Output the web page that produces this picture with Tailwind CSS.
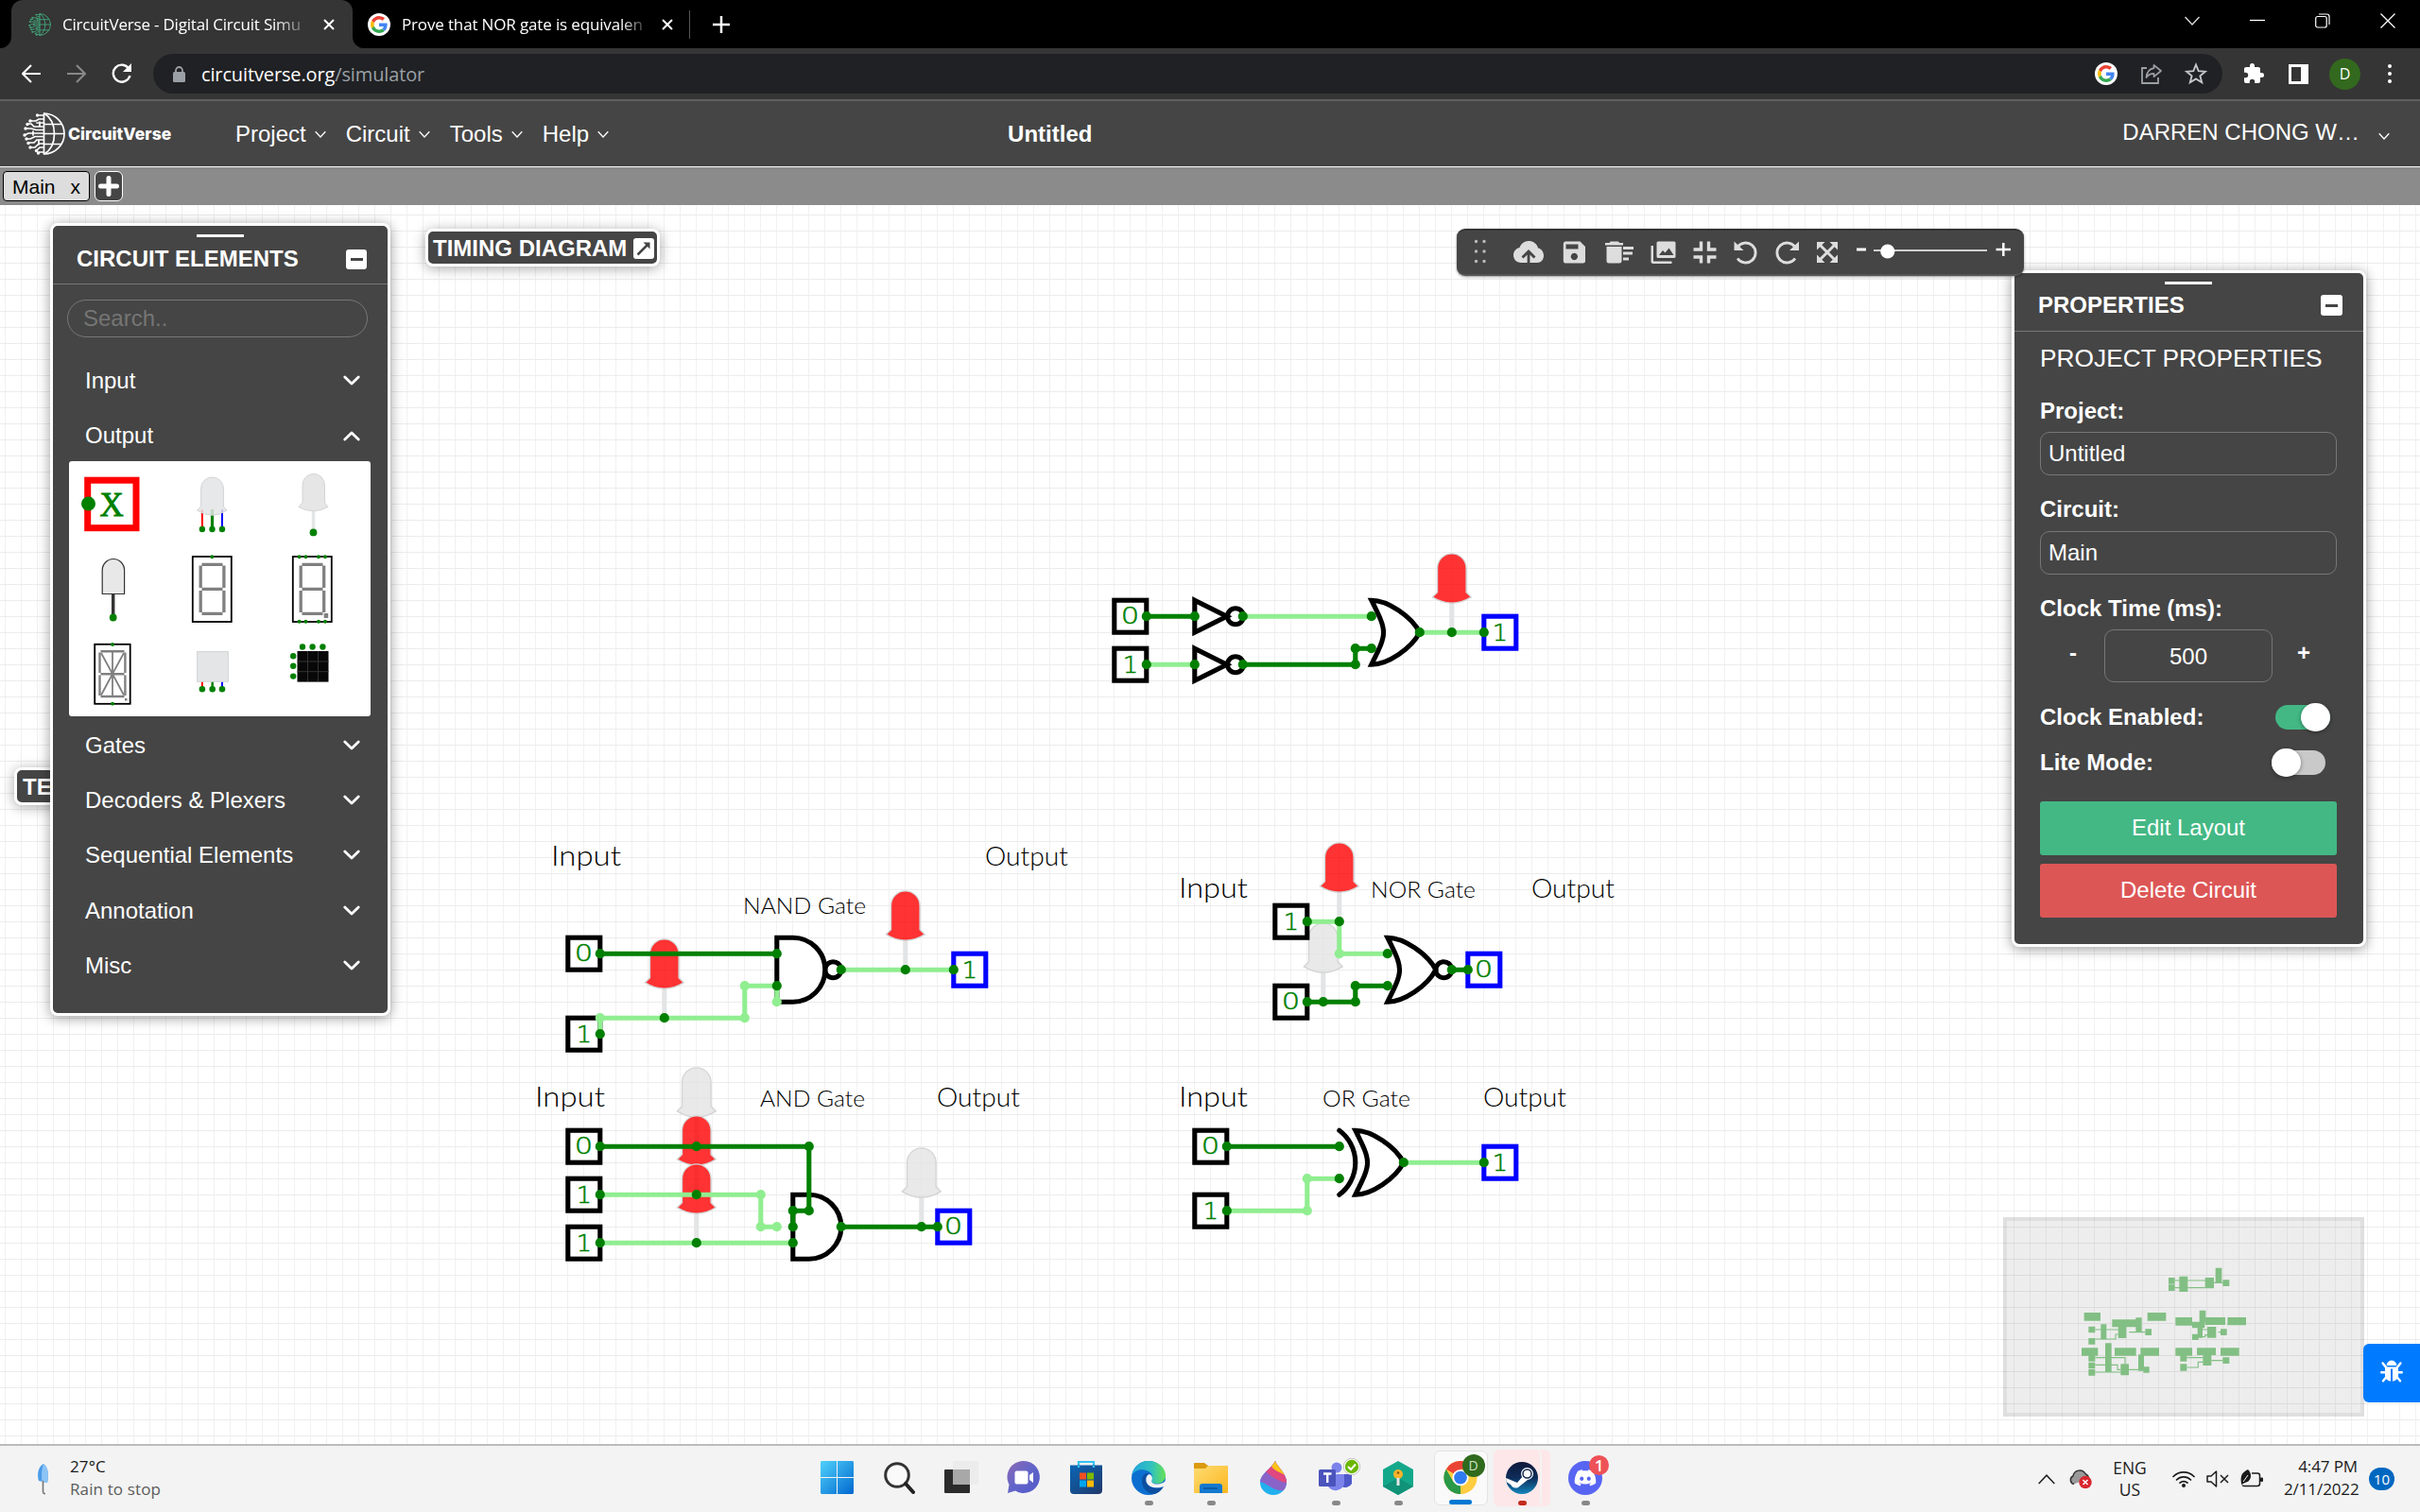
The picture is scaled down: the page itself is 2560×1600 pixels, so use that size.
<!DOCTYPE html>
<html lang="en">
<head>
<meta charset="utf-8">
<title>CircuitVerse - Digital Circuit Simulator</title>
<script src="https://cdn.jsdelivr.net/npm/@tailwindcss/browser@4"></script>
</head>
<body class="w-[2560px] h-[1600px] overflow-hidden flex flex-col bg-white font-['Liberation_Sans',sans-serif] text-2xl leading-none text-white">

<!-- shared symbols -->
<svg class="absolute w-0 h-0" aria-hidden="true">
  <defs>
    <symbol id="google" viewBox="0 0 48 48">
      <path fill="#ea4335" d="M24 9.5c3.54 0 6.71 1.22 9.21 3.6l6.85-6.85C35.9 2.38 30.47 0 24 0 14.62 0 6.51 5.38 2.56 13.22l7.98 6.19C12.43 13.72 17.74 9.5 24 9.5z"/>
      <path fill="#4285f4" d="M46.98 24.55c0-1.57-.15-3.09-.38-4.55H24v9.02h12.94c-.58 2.96-2.26 5.48-4.78 7.18l7.73 6c4.51-4.18 7.09-10.36 7.09-17.65z"/>
      <path fill="#fbbc05" d="M10.53 28.59c-.48-1.45-.76-2.99-.76-4.59s.27-3.14.76-4.59l-7.98-6.19C.92 16.46 0 20.12 0 24c0 3.88.92 7.54 2.56 10.78l7.97-6.19z"/>
      <path fill="#34a853" d="M24 48c6.48 0 11.93-2.13 15.89-5.81l-7.73-6c-2.15 1.45-4.92 2.3-8.16 2.3-6.26 0-11.57-4.22-13.47-9.91l-7.98 6.19C6.51 42.62 14.62 48 24 48z"/>
    </symbol>
    <symbol id="globe" viewBox="0 0 45 45">
      <g fill="none" stroke="currentColor" stroke-width="1.7" stroke-linecap="round">
        <path d="M22.5 1A21.5 21.5 0 0 1 22.5 44M22.5 1V44M23 1C37 10 37 35 23 44M22.5 12.5H41M22.5 22.5H44M22.5 33.5H41"/>
        <path d="M22 3H16M22 7H17L14 9H8M22 11H15M22 15H12L9 12H5M22 18.5H14L9 17H3M22 22H6L2 24M22 25.5H13L8 28H4M22 29H15L12 32H6M22 33H17L13 37H8M22 37H18L15 40M22 42H17M18 10V14M11 20V24M17 29V34"/>
      </g>
      <g fill="currentColor"><circle cx="15.500" cy="3" r="1.700"/><circle cx="8" cy="9" r="1.800"/><circle cx="5" cy="12.500" r="1.700"/><circle cx="3" cy="17" r="1.700"/><circle cx="2" cy="24" r="1.700"/><circle cx="4" cy="28" r="1.700"/><circle cx="6" cy="32.500" r="1.700"/><circle cx="8" cy="37" r="1.700"/><circle cx="14.500" cy="40.500" r="1.700"/><circle cx="16.500" cy="43" r="1.700"/></g>
    </symbol>
    <symbol id="chev" viewBox="0 0 12 12"><path d="M.7 3.200L6 9L11.300 3.200" fill="none" stroke="currentColor" stroke-width="1.300"/></symbol>
    <symbol id="chev-bold" viewBox="0 0 18 12"><path d="M1.800 2L9 9L16.200 2" fill="none" stroke="currentColor" stroke-width="2.800" stroke-linecap="round" stroke-linejoin="round"/></symbol>
    <symbol id="x" viewBox="0 0 12 12"><path d="M1 1L11 11M11 1L1 11" stroke="currentColor" stroke-width="2" fill="none"/></symbol>

    <!-- circuit parts, in circuit units -->
    <g id="led-body"><path d="M-9 0A9 9 0 0 1 9 0V15L12 18Q0 25.500 -12 18L-9 15Z" stroke="#d3d4d5" stroke-width=".8"/></g>
    <g id="led-on"><path d="M0 20V40" stroke="#e3e4e5" stroke-width="3"/><use href="#led-body" fill="#ff0000" fill-opacity=".8"/></g>
    <g id="led-off"><path d="M0 20V40" stroke="#e3e4e5" stroke-width="3"/><use href="#led-body" fill="#e3e4e5" fill-opacity=".8"/></g>
    <g id="box" fill="#fff" stroke-width="3"><rect x="-10" y="-10" width="20" height="20"/></g>
    <g id="d0"><text class="font-['DejaVu_Sans'] font-extralight" transform="scale(1.200 1)" x="-.2" y="4.800" font-size="15" text-anchor="middle" fill="#008000" stroke="#008000" stroke-width=".3">0</text></g>
    <g id="d1"><text class="font-['DejaVu_Sans'] font-extralight" x="0" y="5" font-size="15" text-anchor="middle" fill="#008000" stroke="#008000" stroke-width=".35">1</text></g>
    <g id="in0"><use href="#box" stroke="#000"/><use href="#d0"/></g>
    <g id="in1"><use href="#box" stroke="#000"/><use href="#d1"/></g>
    <g id="out0"><use href="#box" stroke="#00f"/><use href="#d0"/></g>
    <g id="out1"><use href="#box" stroke="#00f"/><use href="#d1"/></g>
    <g id="not" fill="#fff" stroke="#000" stroke-width="3"><circle cx="15.400" cy="0" r="5"/><path d="M-10 -10L10 0L-10 10Z"/></g>
    <g id="or" fill="#fff" stroke="#000" stroke-width="3"><path d="M-10 -20C0 -20 15 -10 20 0C15 10 0 20 -10 20C0 0 0 0 -10 -20Z"/></g>
    <g id="nor"><circle cx="25" cy="0" r="5" fill="#fff" stroke="#000" stroke-width="3"/><use href="#or"/></g>
    <g id="xor"><use href="#or"/><path d="M-20 -20A25 25 0 0 1 -20 20" fill="none" stroke="#000" stroke-width="3" stroke-linecap="round"/></g>
    <g id="and" fill="#fff" stroke="#000" stroke-width="3"><path d="M-10 -20H0A20 20 0 0 1 0 20H-10Z"/></g>
    <g id="nand"><circle cx="25" cy="0" r="5" fill="#fff" stroke="#000" stroke-width="3"/><use href="#and"/></g>
  </defs>
</svg>

<!-- browser tabs -->
<header class="h-[51px] shrink-0 bg-black flex font-['Open_Sans',sans-serif] text-[17px]">
  <div class="w-3 flex items-end"><svg class="w-3 h-3" viewBox="0 0 12 12"><path d="M12 0V12H0A12 12 0 0 0 12 0Z" fill="#353535"/></svg></div>
  <div class="w-[361px] bg-[#353535] rounded-t-xl flex items-center pl-[18px] pr-[18px]">
    <svg class="w-6 h-6 text-[#42a97c] shrink-0"><use href="#globe"/></svg>
    <div class="ml-3 w-[264px] overflow-hidden whitespace-nowrap leading-6 tracking-[-0.2px] [mask-image:linear-gradient(to_right,#000_85%,transparent)]">CircuitVerse - Digital Circuit Simu</div>
    <svg class="w-3 h-3 ml-[12px]"><use href="#x"/></svg>
  </div>
  <div class="w-3 flex items-end"><svg class="w-3 h-3" viewBox="0 0 12 12"><path d="M0 0V12H12A12 12 0 0 1 0 0Z" fill="#353535"/></svg></div>
  <div class="w-[346px] flex items-center pl-1">
    <div class="w-6 h-6 rounded-full bg-white flex items-center justify-center shrink-0"><svg class="w-[18px] h-[18px]"><use href="#google"/></svg></div>
    <div class="ml-3 w-[263px] overflow-hidden whitespace-nowrap leading-6 tracking-[-0.15px] [mask-image:linear-gradient(to_right,#000_88%,transparent)]">Prove that NOR gate is equivalen</div>
    <svg class="w-3 h-3 ml-[12px]"><use href="#x"/></svg>
    <div class="w-px h-[30px] bg-[#555] ml-[17px]"></div>
  </div>
  <div class="flex items-center pl-[23px]"><svg class="w-[18px] h-[18px]" viewBox="0 0 18 18"><path d="M9 0V18M0 9H18" stroke="#fff" stroke-width="2.500"/></svg></div>
  <div class="ml-auto flex items-start pt-[14px] pr-[26px]">
    <svg class="w-4 h-4 mr-[53px]" viewBox="0 0 16 16"><path d="M.5 4L8 12L15.500 4" stroke="#ddd" stroke-width="1.300" fill="none"/></svg>
    <svg class="w-4 h-4 mr-[53px]" viewBox="0 0 16 16"><path d="M0 7.500H16" stroke="#fff" stroke-width="1.300"/></svg>
    <svg class="w-4 h-4 mr-[53px]" viewBox="0 0 16 16"><rect x=".7" y="3.500" width="11.500" height="11.500" rx="2" stroke="#fff" stroke-width="1.200" fill="none"/><path d="M4 1H12.500Q15 1 15 3.500V12" stroke="#fff" stroke-width="1.200" fill="none"/></svg>
    <svg class="w-4 h-4" viewBox="0 0 16 16"><path d="M.5 .5L15.500 15.500M15.500 .5L.5 15.500" stroke="#fff" stroke-width="1.300"/></svg>
  </div>
</header>

<!-- address bar -->
<div class="h-[56px] shrink-0 bg-[#353535] border-b-2 border-[#5f5f5f] flex items-center pl-[23px] font-['Open_Sans',sans-serif]">
  <svg class="w-5 h-5" viewBox="0 0 20 20"><path d="M10 1L1 10L10 19M1 10H20" fill="none" stroke="#fff" stroke-width="2.200"/></svg>
  <svg class="w-5 h-5 ml-7" viewBox="0 0 20 20"><path d="M10 1L19 10L10 19M0 10H19" fill="none" stroke="#888" stroke-width="2.200"/></svg>
  <svg class="w-[22px] h-[22px] ml-[27px]" viewBox="0 0 22 22"><path d="M18.500 6A9 9 0 1 0 19.500 13" fill="none" stroke="#fff" stroke-width="2.400"/><path d="M21 0V9H12Z" fill="#fff"/></svg>
  <div class="ml-[22px] w-[2189px] h-[42px] rounded-full bg-[#202124] flex items-center pl-[21px] pr-[16px]">
    <svg class="w-[13px] h-[17px]" viewBox="0 0 13 17"><rect x="0" y="6" width="13" height="11" rx="1.500" fill="#9aa0a6"/><path d="M3 7V4.500A3.500 3.500 0 0 1 10 4.500V7" fill="none" stroke="#9aa0a6" stroke-width="1.800"/></svg>
    <div class="ml-[17px] pt-px text-[20px] tracking-[-0.13px]">circuitverse.org<span class="text-[#9aa0a6]">/simulator</span></div>
    <div class="ml-auto w-6 h-6 rounded-full bg-white flex items-center justify-center"><svg class="w-[18px] h-[18px]"><use href="#google"/></svg></div>
    <svg class="w-[22px] h-[22px] ml-[25px]" viewBox="0 0 22 22"><path d="M6 5H1V21H18V15" fill="none" stroke="#9aa0a6" stroke-width="1.800"/><path d="M13.500 1.800L21 8L13.500 14.200V10.800C9.500 10.800 7 12.500 5.500 15C6 9 9.500 5.800 13.500 5.200Z" fill="none" stroke="#9aa0a6" stroke-width="1.700" stroke-linejoin="round"/></svg>
    <svg class="w-6 h-6 ml-6" viewBox="0 0 24 24"><path d="M12 2.500L14.700 9.200L22 9.700L16.400 14.300L18.200 21.300L12 17.400L5.800 21.300L7.600 14.300L2 9.700L9.300 9.200Z" fill="none" stroke="#c3c6ca" stroke-width="1.900"/></svg>
  </div>
  <svg class="w-[24px] h-[24px] ml-[21px]" viewBox="0 0 24 24"><path d="M20.500 11H19V7c0-1.100-.9-2-2-2h-4V3.500a2.500 2.500 0 0 0-5 0V5H4c-1.100 0-2 .9-2 2v3.800h1.500a2.700 2.700 0 0 1 0 5.400H2V20c0 1.100.9 2 2 2h3.800v-1.500a2.700 2.700 0 0 1 5.400 0V22H17c1.100 0 2-.9 2-2v-4h1.500a2.500 2.500 0 0 0 0-5z" fill="#fff"/></svg>
  <div class="w-[21px] h-[21px] ml-[25px] border-[3px] border-r-[8px] border-white"></div>
  <div class="w-[33px] h-[33px] ml-[22px] rounded-full bg-[#33691e] flex items-center justify-center text-[16px]">D</div>
  <div class="ml-[29px] flex flex-col gap-[4px]"><i class="w-1 h-1 rounded-full bg-white"></i><i class="w-1 h-1 rounded-full bg-white"></i><i class="w-1 h-1 rounded-full bg-white"></i></div>
</div>

<!-- site navigation -->
<nav class="h-[70px] shrink-0 bg-[#454545] border-b border-white flex items-center pl-6">
  <svg class="w-[45px] h-[45px]"><use href="#globe"/></svg>
  <div class="w-[113px] ml-[3px] font-['Inter',sans-serif] font-extrabold text-[17.500px] tracking-[0.05px]">CircuitVerse</div>
  <div class="flex items-center ml-[64px]">Project<svg class="w-3 h-3 ml-[9px]"><use href="#chev"/></svg></div>
  <div class="flex items-center ml-[21px]">Circuit<svg class="w-3 h-3 ml-[9px]"><use href="#chev"/></svg></div>
  <div class="flex items-center ml-[21px]">Tools<svg class="w-3 h-3 ml-[9px]"><use href="#chev"/></svg></div>
  <div class="flex items-center ml-[21px]">Help<svg class="w-3 h-3 ml-[9px]"><use href="#chev"/></svg></div>
  <div class="font-bold ml-[422px]">Untitled</div>
  <div class="ml-auto pr-[32px] flex items-center"><span class="-mt-1">DARREN CHONG W…</span><svg class="w-3 h-3 ml-5 mt-1"><use href="#chev"/></svg></div>
</nav>

<!-- circuit tabs -->
<div class="h-10 shrink-0 bg-[#8b8b8b] flex items-center pl-[3px] pb-px">
  <div class="w-[92px] h-8 rounded-[4px] border border-black bg-[#ddd] text-black text-[21px] flex items-center justify-between px-[9px] pt-px"><span>Main</span><span>x</span></div>
  <div class="w-[30px] h-8 ml-[5px] rounded-[6px] border border-white bg-[#454545] flex items-center justify-center"><svg class="w-[22px] h-[22px]" viewBox="0 0 22 22"><path d="M11 2.500V19.500M2.500 11H19.500" stroke="#fff" stroke-width="5" stroke-linecap="round"/></svg></div>
</div>

<!-- canvas -->
<main class="relative h-[1311px] shrink-0 overflow-hidden bg-white bg-[linear-gradient(to_bottom,#ececec_1px,transparent_1px),linear-gradient(to_right,#f1f1f1_1px,transparent_1px)] bg-[size:17px_17px] bg-[position:5px_10px]">
  <svg class="absolute inset-0 w-[2560px] h-[1311px]" viewBox="0 217 2560 1311" fill="none">
    <g transform="translate(5.800 6.200) scale(1.700)">
      <!-- parts -->
      <use href="#in0" x="700" y="380"/><use href="#in1" x="700" y="410"/>
      <use href="#not" x="750" y="380"/><use href="#not" x="750" y="410"/>
      <use href="#or" x="860" y="390"/><use href="#led-on" x="900" y="350"/><use href="#out1" x="930" y="390"/>

      <use href="#in0" x="360" y="590"/><use href="#in1" x="360" y="640"/>
      <use href="#led-on" x="410" y="590"/><use href="#nand" x="490" y="600"/>
      <use href="#led-on" x="560" y="560"/><use href="#out1" x="600" y="600"/>

      <use href="#in0" x="360" y="710"/><use href="#in1" x="360" y="740"/><use href="#in1" x="360" y="770"/>
      <use href="#led-off" x="430" y="670"/><use href="#led-on" x="430" y="700"/><use href="#led-on" x="430" y="730"/>
      <use href="#and" x="500" y="760"/><use href="#led-off" x="570" y="720"/><use href="#out0" x="590" y="760"/>

      <use href="#led-off" x="820" y="580"/><use href="#in1" x="800" y="570"/><use href="#in0" x="800" y="620"/>
      <use href="#led-on" x="830" y="530"/><use href="#nor" x="870" y="600"/><use href="#out0" x="920" y="600"/>

      <use href="#in0" x="750" y="710"/><use href="#in1" x="750" y="750"/><use href="#xor" x="850" y="720"/><use href="#out1" x="930" y="720"/>

      <!-- high wires -->
      <path stroke="#90ee90" stroke-width="3" d="M710 410H740M770 380H850M880 390H920M370 640V630H460V610H480V620M520 600H590M370 740H470V760H480M370 770H490M810 570H830V590H860M760 750H810V730H830M870 720H920"/>
      <!-- low wires -->
      <path stroke="#008000" stroke-width="3" d="M710 380H740M770 410H840V400H850M370 590H480M370 710H500V750H490V760M520 760H580M810 620H840V610H860M900 600H910M760 710H830"/>
      <!-- nodes -->
      <path stroke="#90ee90" stroke-width="6" stroke-linecap="round" d="M370 630h0M460 630h0M460 610h0M480 620h0M470 740h0M470 760h0M480 760h0M830 590h0M810 750h0M810 730h0"/>
      <path stroke="#008000" stroke-width="6" stroke-linecap="round" d="M710 380h0M710 410h0M740 380h0M740 410h0M770 380h0M770 410h0M840 410h0M840 400h0M850 400h0M850 380h0M880 390h0M900 390h0M920 390h0M370 590h0M370 640h0M410 630h0M480 590h0M480 610h0M520 600h0M560 600h0M590 600h0M370 710h0M370 740h0M370 770h0M430 710h0M430 740h0M430 770h0M500 710h0M500 750h0M490 750h0M490 760h0M490 770h0M520 760h0M570 760h0M580 760h0M810 570h0M830 570h0M810 620h0M820 620h0M840 620h0M840 610h0M860 610h0M860 590h0M900 600h0M910 600h0M760 710h0M760 750h0M830 710h0M830 730h0M870 720h0M920 720h0"/>
    </g>
    <g class="font-['Lato'] font-light" fill="#000">
      <g font-size="30">
        <text x="583" y="916" textLength="74" lengthAdjust="spacingAndGlyphs">Input</text>
        <text x="566" y="1171" textLength="74" lengthAdjust="spacingAndGlyphs">Input</text>
        <text x="1247" y="950" textLength="73" lengthAdjust="spacingAndGlyphs">Input</text>
        <text x="1247" y="1171" textLength="73" lengthAdjust="spacingAndGlyphs">Input</text>
      </g>
      <g font-size="27">
        <text x="1042" y="916" textLength="88" lengthAdjust="spacingAndGlyphs">Output</text>
        <text x="991" y="1171" textLength="88" lengthAdjust="spacingAndGlyphs">Output</text>
        <text x="1620" y="950" textLength="88" lengthAdjust="spacingAndGlyphs">Output</text>
        <text x="1569" y="1171" textLength="88" lengthAdjust="spacingAndGlyphs">Output</text>
      </g>
      <g font-size="24">
        <text x="786" y="967" textLength="130" lengthAdjust="spacingAndGlyphs">NAND Gate</text>
        <text x="804" y="1171" textLength="111" lengthAdjust="spacingAndGlyphs">AND Gate</text>
        <text x="1450" y="950" textLength="111" lengthAdjust="spacingAndGlyphs">NOR Gate</text>
        <text x="1399" y="1171" textLength="93" lengthAdjust="spacingAndGlyphs">OR Gate</text>
      </g>
    </g>
  </svg>

  <!-- testbench panel, mostly hidden -->
  <section class="absolute left-[15px] top-[595px] w-[160px] h-10 rounded-lg border-[3px] border-white bg-[#454545] shadow-[0_2px_14px_rgba(0,0,0,0.35)] font-bold flex items-center pl-1.5 pt-0.5">TE</section>

  <!-- circuit elements -->
  <section class="absolute left-[53px] top-[19px] w-[360px] h-[839px] rounded-lg border-[3px] border-white bg-[#454545] shadow-[0_2px_14px_rgba(0,0,0,0.4)] flex flex-col">
    <div class="h-[62px] border-b border-[#777] flex flex-col pl-[25px] pr-[22px]">
      <div class="w-[50px] h-[3px] bg-white mt-[9px] ml-[127px]"></div>
      <div class="mt-[9px] h-7 flex items-center justify-between font-bold"><span>CIRCUIT ELEMENTS</span>
        <div class="w-[22px] h-[21px] bg-white rounded-[3px] flex items-center justify-center"><i class="w-[13px] h-[3px] bg-[#454545]"></i></div></div>
    </div>
    <div class="mt-4 ml-[15px] w-[318px] h-10 rounded-[20px] border border-[#777] text-[#757575] flex items-center pl-4">Search..</div>
    <div class="mt-[17px] h-[58px] flex items-center justify-between pl-[34px] pr-[29px]"><span>Input</span><svg class="w-[18px] h-3"><use href="#chev-bold"/></svg></div>
    <div class="h-[58px] flex items-center justify-between pl-[34px] pr-[29px]"><span>Output</span><svg class="w-[18px] h-3 rotate-180"><use href="#chev-bold"/></svg></div>
    <div class="-mt-0.5 ml-[17px] w-[319px] h-[270px] shrink-0 bg-white rounded-[3px]">
      <svg class="w-[319px] h-[270px]" viewBox="73 488 319 270" fill="none">
        <rect x="92.700" y="508.200" width="51.300" height="50.500" stroke="#f00" stroke-width="7"/>
        <circle cx="93.500" cy="533" r="7.500" fill="#008000"/>
        <text class="font-['Liberation_Serif']" x="118.200" y="545.500" font-size="35" text-anchor="middle" fill="#008000" stroke="#008000" stroke-width=".8">X</text>

        <path d="M213.900 539V560" stroke="#f00" stroke-width="2"/><path d="M224.500 539V560" stroke="#008000" stroke-width="3.200"/><path d="M235 539V560" stroke="#00f" stroke-width="2"/>
        <path d="M212.600 517A11.900 12 0 0 1 236.400 517V536L240 540Q224.500 550.500 208.500 540L212.600 536Z" fill="#e3e4e5" fill-opacity=".85" stroke="#d3d4d5"/>
        <path stroke="#008000" stroke-width="6.400" stroke-linecap="round" d="M213.900 560h0M224.500 560h0M235 560h0"/>

        <path d="M331.500 540V562" stroke="#e3e4e5" stroke-width="3.500"/>
        <path d="M320 513.500A11.700 12 0 0 1 343.500 513.500V532L347 536.500Q331.500 545 316 536.500L320 532Z" fill="#e6e6e7" stroke="#d3d4d5"/>
        <circle cx="331.500" cy="563.400" r="3.900" fill="#008000"/>

        <path d="M119.700 629V652" stroke="#333" stroke-width="3.500"/>
        <path d="M108.200 603.500A11.700 12 0 0 1 131.600 603.500V628.500H108.200Z" fill="#e8e8e8" stroke="#333" stroke-width="1.200"/>
        <circle cx="119.700" cy="653.500" r="3.900" fill="#008000"/>

        <rect x="203.800" y="589" width="41" height="69" stroke="#000" stroke-width="1.800"/>
        <path stroke="#808080" stroke-width="3.300" d="M213.500 597.400H235.500M213.500 623.400H235.500M213.500 649.300H235.500M212.200 598.500V622M212.200 625V648M236.900 598.500V622M236.900 625V648"/>
        <circle cx="224.300" cy="589.200" r="2" fill="#008000"/>

        <rect x="309.800" y="589" width="41" height="69" stroke="#000" stroke-width="1.800"/>
        <path stroke="#808080" stroke-width="3.300" d="M319.500 597.400H341.500M319.500 623.400H341.500M319.500 649.300H341.500M318.200 598.500V622M318.200 625V648M342.700 598.500V622M342.700 625V648"/>
        <rect x="342.700" y="649" width="4.500" height="5" fill="#808080"/>
        <path stroke="#008000" stroke-width="4" stroke-linecap="round" d="M316.700 589.200h0M323.400 589.200h0M337 589.200h0M344 589.200h0M316.700 657.700h0M323.400 657.700h0M337 657.700h0M344 657.700h0"/>

        <rect x="100.200" y="681.800" width="37.500" height="63" stroke="#000" stroke-width="1.800"/>
        <path stroke="#808080" stroke-width="2.400" d="M106.500 689.300H131.500M106.500 713.200H131.500M106.500 737H131.500M105.500 690.500V712M105.500 714.500V736M132.400 690.500V712M132.400 714.500V736"/>
        <path stroke="#808080" stroke-width="1.800" d="M119 690V736M107 691L119 713.200L131 691M107 735.500L119 713.200L131 735.500"/>
        <rect x="132" y="739" width="2.500" height="2.500" fill="#808080"/>
        <circle cx="119" cy="682" r="1.900" fill="#008000"/><circle cx="119" cy="744.700" r="1.900" fill="#008000"/>

        <path d="M213.900 721V729" stroke="#f00" stroke-width="2"/><path d="M224.700 721V729" stroke="#008000" stroke-width="2.500"/><path d="M235 721V729" stroke="#00f" stroke-width="2"/>
        <rect x="208.600" y="689.500" width="32.800" height="31.800" fill="#e3e5e7" stroke="#d3d4d5"/>
        <path stroke="#008000" stroke-width="6.600" stroke-linecap="round" d="M213.900 729.300h0M224.700 729.300h0M235 729.300h0"/>

        <rect x="314.500" y="689" width="33" height="32.600" fill="#080808"/>
        <path stroke="#333" stroke-width="1" d="M325.500 689V721M336.500 689V721M314.500 700H347.500M314.500 710.700H347.500"/>
        <path stroke="#008000" stroke-width="6.400" stroke-linecap="round" d="M320 684.500h0M330.600 684.500h0M341.400 684.500h0M310.200 694.200h0M310.200 704.800h0M310.200 715.600h0"/>
      </svg>
    </div>
    <div class="mt-[2px] h-[58.200px] flex items-center justify-between pl-[34px] pr-[29px]"><span>Gates</span><svg class="w-[18px] h-3"><use href="#chev-bold"/></svg></div>
    <div class="h-[58.200px] flex items-center justify-between pl-[34px] pr-[29px]"><span>Decoders &amp; Plexers</span><svg class="w-[18px] h-3"><use href="#chev-bold"/></svg></div>
    <div class="h-[58.200px] flex items-center justify-between pl-[34px] pr-[29px]"><span>Sequential Elements</span><svg class="w-[18px] h-3"><use href="#chev-bold"/></svg></div>
    <div class="h-[58.200px] flex items-center justify-between pl-[34px] pr-[29px]"><span>Annotation</span><svg class="w-[18px] h-3"><use href="#chev-bold"/></svg></div>
    <div class="h-[58.200px] flex items-center justify-between pl-[34px] pr-[29px]"><span>Misc</span><svg class="w-[18px] h-3"><use href="#chev-bold"/></svg></div>
  </section>

  <!-- timing diagram -->
  <section class="absolute left-[450px] top-[25px] w-[248px] h-10 rounded-lg border-[3px] border-white bg-[#454545] shadow-[0_2px_14px_rgba(0,0,0,0.35)] font-bold flex items-center justify-between pl-[5px] pr-[3px] pt-px whitespace-nowrap">TIMING DIAGRAM
    <svg class="w-[22px] h-[22px]" viewBox="0 0 22 22"><rect width="22" height="22" rx="3" fill="#fff"/><path d="M4.500 17.500L16 6" stroke="#454545" stroke-width="2.500"/><path d="M10.500 4.500H17.500V11.500Z" fill="#454545"/></svg>
  </section>

  <!-- properties -->
  <section class="absolute left-[2128px] top-[69px] w-[375px] h-[716px] rounded-lg border-[3px] border-white bg-[#454545] shadow-[0_2px_14px_rgba(0,0,0,0.4)] flex flex-col">
    <div class="h-[62px] border-b border-[#777] flex flex-col pl-[25px] pr-[22px]">
      <div class="w-[50px] h-[3px] bg-white mt-[9px] ml-[134px]"></div>
      <div class="mt-[8px] h-7 flex items-center justify-between font-bold"><span>PROPERTIES</span>
        <div class="w-[23px] h-[22px] bg-white rounded-[3px] flex items-center justify-center"><i class="w-[13px] h-[3px] bg-[#454545]"></i></div></div>
    </div>
    <div class="flex flex-col pl-[27px] pr-[28px]">
      <div class="mt-[13px] h-[30px] flex items-center text-[26.300px] whitespace-nowrap">PROJECT PROPERTIES</div>
      <div class="mt-[27px] h-7 flex items-center font-bold">Project:</div>
      <div class="mt-2 h-[46px] border border-[#777] rounded-[10px] flex items-center pl-[8px] pb-px">Untitled</div>
      <div class="mt-[22px] h-7 flex items-center font-bold">Circuit:</div>
      <div class="mt-[9px] h-[46px] border border-[#777] rounded-[10px] flex items-center pl-[8px]">Main</div>
      <div class="mt-[22px] h-7 flex items-center font-bold">Clock Time (ms):</div>
      <div class="mt-2 h-[56px] flex items-center justify-between pl-[31px] pr-[28px]">
        <span class="font-bold -mt-1.5">-</span>
        <div class="w-[178px] h-[56px] border border-[#777] rounded-[10px] flex items-center justify-center ml-[3px] pt-px">500</div>
        <span class="font-bold -mt-1.5">+</span>
      </div>
      <div class="mt-[21px] h-8 flex items-center justify-between font-bold pr-[7px]">Clock Enabled:
        <div class="w-[58px] h-[26px] rounded-full bg-[#43b884] flex items-center justify-end"><i class="w-[31px] h-[30px] shrink-0 rounded-full bg-white shadow-[0_1px_4px_rgba(0,0,0,0.4)]"></i></div></div>
      <div class="mt-4 h-8 flex items-center justify-between font-bold pr-3">Lite Mode:
        <div class="w-[57px] h-[26px] rounded-full bg-[#c9c9c9] flex items-center"><i class="w-[31px] h-[30px] shrink-0 rounded-full bg-white shadow-[0_1px_4px_rgba(0,0,0,0.4)]"></i></div></div>
      <div class="mt-[25px] h-[57px] rounded-[3px] bg-[#43b884] flex items-center justify-center pb-px">Edit Layout</div>
      <div class="mt-[9px] h-[57px] rounded-[3px] bg-[#dc5656] flex items-center justify-center pb-px">Delete Circuit</div>
    </div>
  </section>

  <!-- quick toolbar -->
  <section class="absolute left-[1541px] top-[25px] w-[600px] h-[50px] rounded-[9px] bg-[#454545] border-y-[2px] border-t-[#333] border-b-[#555] shadow-[0_1px_3px_rgba(0,0,0,0.4)]">
    <svg class="w-[600px] h-[46px]" viewBox="1541 243.500 600 46" fill="#ddd">
      <path stroke="#bbb" stroke-width="3.400" stroke-linecap="round" d="M1561.500 255h0M1570 255h0M1561.500 265.500h0M1570 265.500h0M1561.500 276h0M1570 276h0"/>
      <path d="M1627 262C1626 257 1621.500 254.500 1617 254.500C1612.500 254.500 1609 257.500 1607.500 261.500C1603.500 262.500 1601 265.500 1601 269.500C1601 274.500 1605 277.500 1609 277.500H1615.600V269L1611.500 273L1609.500 271L1617 263.500L1624.500 271L1622.500 273L1618.400 269V277.500H1626C1630.500 277.500 1633 274 1633 270C1633 266 1630.500 262.500 1627 262Z"/>
      <path fill-rule="evenodd" d="M1656 255H1671.500L1677 260.500V275.500Q1677 278 1674.500 278H1656Q1653.800 278 1653.800 275.500V257.500Q1653.800 255 1656 255ZM1656.500 258V263H1669.500V258ZM1665.300 267.300A3.700 3.700 0 1 0 1665.400 267.300Z"/>
      <path d="M1703.500 255H1712L1713 256.500H1717V259H1698V256.500H1702.500ZM1699.500 260.500H1715.500V275.500Q1715.500 278 1713 278H1702Q1699.500 278 1699.500 275.500ZM1717 260.500H1728V263.500H1717ZM1717 266H1727V269H1717ZM1717 272H1723V275H1717Z"/>
      <path fill-rule="evenodd" d="M1753 255H1770Q1771.500 255 1771.500 256.500V271Q1771.500 272.500 1770 272.500H1753Q1751.500 272.500 1751.500 271V256.500Q1751.500 255 1753 255ZM1754 269.500H1769.500L1764.500 262L1760.500 267L1758 264.500ZM1748 259.500V276H1767.500V278.500H1748Q1745.500 278.500 1745.500 276V259.500Z" transform="translate(1 0)"/>
      <path stroke="#ddd" stroke-width="3.400" fill="none" d="M1799.500 255V263.500H1791.500M1807.500 255V263.500H1815.500M1799.500 278V271.500H1791.500M1807.500 278V271.500H1815.500"/>
      <path stroke="#ddd" stroke-width="2.800" fill="none" d="M1838 261A10.500 10.500 0 1 1 1838 273"/><path d="M1834.500 255V264.500H1844.500Z"/>
      <path stroke="#ddd" stroke-width="2.800" fill="none" d="M1899 261A10.500 10.500 0 1 0 1899 273"/><path d="M1903 255V264.500H1893Z"/>
      <path stroke="#ddd" stroke-width="3" d="M1925 258.500L1941 274.500M1941 258.500L1925 274.500"/><path d="M1922 255.500H1930.500L1922 264ZM1944 255.500V264L1935.500 255.500ZM1922 277.500V269L1930.500 277.500ZM1944 277.500H1935.500L1944 269Z"/>
      <path stroke="#fff" stroke-width="3" d="M1964 263.500H1974"/>
      <path stroke="#fff" stroke-width="1.300" d="M1982 264.500H2102"/><circle cx="1996.800" cy="265.500" r="7.600" fill="#fff"/>
      <path stroke="#fff" stroke-width="2.500" d="M2111.500 263.500H2127M2119.300 256.500V270.500"/>
    </svg>
  </section>

  <!-- minimap -->
  <div class="absolute left-[2119px] top-[1071px] w-[382px] h-[211px] border-4 border-black/6 bg-black/7">
    <svg class="w-[374px] h-[203px]" viewBox="69 66 1122 609" fill="#82bf84">
      <path d="M582 246h20v20h-20zM582 268h20v20h-20zM616 242h27v49h-27zM698 246h28v34h-28zM731 215h20v49h-20zM754 253h21v20h-21z"/>
      <path d="M314 357h52v26h-52zM515 357h59v26h-59zM403 379h84v24h-84zM478 373h19v46h-19zM328 401h21v20h-21zM367 394h18v48h-18zM422 401h26v37h-26zM508 409h20v20h-20zM328 438h21v20h-21z"/>
      <path d="M306 469h52v25h-52zM411 469h68v25h-68zM493 469h59v25h-59zM381 454h20v92h-20zM486 490h18v52h-18zM328 494h21v18h-21zM328 515h21v20h-21zM328 537h21v20h-21zM430 520h26v36h-26zM502 529h19v19h-19z"/>
      <path d="M604 372h53v26h-53zM698 372h64v24h-64zM769 372h59v25h-59zM680 350h20v36h-20zM657 386h40v20h-40zM674 400h16v37h-16zM657 425h20v19h-20zM705 402h28v35h-28zM747 409h20v20h-20z"/>
      <path d="M604 469h53v25h-53zM672 469h60v23h-60zM747 469h59v25h-59zM619 494h21v18h-21zM691 490h27v35h-27zM619 520h21v22h-21zM754 499h21v20h-21z"/>
      <path fill="none" stroke="#82bf84" stroke-width="3.500" d="M602 255H700M602 278H698M726 262H754M349 411H422M349 441H414V426H422M457 419H508M349 500H444V520M349 523H420V538H430M349 546H430M456 538H502M690 411H705M677 434H698V428H705M740 419H747M640 500H691M640 531H676V514H691M718 509H754"/>
    </svg>
  </div>

  <!-- report bug -->
  <div class="absolute left-[2500px] top-[1205px] w-[60px] h-[62px] bg-[#007bff] rounded-l-md flex items-center justify-center pb-1">
    <svg class="w-6 h-6" viewBox="0 0 24 24" fill="#fff"><path d="M6.600 6A5.400 5.400 0 0 1 17.400 6Z"/><path d="M5 7.500H19V16.500Q18.500 22 13 22.800V9.500H11V22.800Q5.500 22 5 16.500Z"/><path d="M2.600 3.500L6.500 8.500M21.400 3.500L17.500 8.500M1.200 13.300H6M22.800 13.300H18M3 22.300L6.500 18M21 22.300L17.500 18" stroke="#fff" stroke-width="2.400" stroke-linecap="round"/></svg>
  </div>
</main>

<!-- taskbar -->
<footer class="h-[72px] shrink-0 bg-[#f3f3f3] border-t-2 border-[#bbb] flex text-[#1b1b1b] font-['Open_Sans',sans-serif] text-[17px]">
  <div class="w-[852px] flex items-center pl-[36px]">
    <svg class="w-6 h-9" viewBox="0 0 24 36"><path d="M10 2C4 5 3 14 5 20L14 22C16 15 15 5 10 2Z" fill="#4a9be8"/><path d="M10 2C8 8 7.500 14 8.500 21L14 22C16 15 15 5 10 2Z" fill="#8cc4f5"/><path d="M9.500 20V31Q9.500 34 12 33.500" fill="none" stroke="#777" stroke-width="1.600"/></svg>
    <div class="ml-[14px] pb-[2px] flex flex-col leading-6 tracking-[0.12px]"><span>27°C</span><span class="text-[#5c5c5c]">Rain to stop</span></div>
  </div>
  <div class="flex [&>*]:w-[66px]">
    <div class="pt-[16px] flex justify-center"><svg class="w-[35px] h-[35px]" viewBox="0 0 35 35"><defs><linearGradient id="w" gradientUnits="userSpaceOnUse" x1="0" y1="0" x2="35" y2="35"><stop stop-color="#4fd2fb"/><stop offset="1" stop-color="#0067cf"/></linearGradient></defs><path fill="url(#w)" d="M1 0H17V17H0V1ZM18 0H34L35 1V17H18ZM0 18H17V35H1L0 34ZM18 18H35V34L34 35H18Z"/></svg></div>
    <div class="pt-[16px] flex justify-center"><svg class="w-[34px] h-[36px]" viewBox="0 0 34 36"><circle cx="15" cy="15" r="12.300" fill="#fafafa" stroke="#333" stroke-width="3"/><path d="M24 24L32 33" stroke="#222" stroke-width="4" stroke-linecap="round"/></svg></div>
    <div class="pt-[16px] flex justify-center"><svg class="w-[36px] h-[36px]" viewBox="0 0 36 36"><rect x="0" y="9" width="27" height="25" rx="1" fill="#2b2b2b"/><rect x="9" y="0" width="27" height="25" rx="1" fill="#ececec"/><rect x="9" y="9" width="18" height="16" fill="#a8a8a8"/></svg></div>
    <div class="pt-[16px] flex justify-center"><svg class="w-[36px] h-[36px]" viewBox="0 0 36 36"><defs><linearGradient id="ch" x1="0" y1="0" x2="1" y2="1"><stop stop-color="#8d6ab4"/><stop offset=".5" stop-color="#6264c9"/><stop offset="1" stop-color="#5059c9"/></linearGradient></defs><path d="M18 0A17 17 0 1 1 9 31.500L1 34L2.500 25A17 17 0 0 1 18 0Z" fill="url(#ch)"/><rect x="8.500" y="10.500" width="14" height="14" rx="2" fill="#fff"/><path d="M24 15L28 12V23L24 20Z" fill="#fff"/></svg></div>
    <div class="pt-[16px] flex justify-center"><svg class="w-[36px] h-[36px]" viewBox="0 0 36 36"><defs><linearGradient id="st" x1="0" y1="0" x2="1" y2="1"><stop stop-color="#0a66b5"/><stop offset="1" stop-color="#20386b"/></linearGradient></defs><path d="M10 7V1H26V7" fill="none" stroke="#35c1f1" stroke-width="2.200"/><path d="M1 4.500H35V31Q35 35 31 35H5Q1 35 1 31Z" fill="url(#st)"/><path d="M10 5V7M26 5V7" stroke="#35c1f1" stroke-width="2.200"/><path fill="#f25022" d="M11 12.500h7v7h-7z"/><path fill="#7fba00" d="M19 12.500h7v7h-7z"/><path fill="#00a4ef" d="M11 20.500h7v7h-7z"/><path fill="#ffb900" d="M19 20.500h7v7h-7z"/></svg></div>
    <div class="pt-[16px] flex flex-col items-center"><svg class="w-[36px] h-[36px]" viewBox="0 0 36 36"><defs><linearGradient id="e1" x1="0" y1="0" x2="1" y2="0"><stop stop-color="#22a6dc"/><stop offset=".6" stop-color="#33c3bb"/><stop offset="1" stop-color="#66e254"/></linearGradient></defs><circle cx="18" cy="18" r="18" fill="#0c6fd0"/><path d="M.5 15C2 6 9 0 18 0C28 0 36 7 36 15.500C36 21 31.500 24 27 24C23 24 20.500 22.500 21.500 20.500C23 17 22 13 18 11C12 8 4 9 .5 15Z" fill="url(#e1)"/><path d="M11 20C10 28 17 35 24 35C28 34 32 31 34 27C28 30 18 29 15.500 22C14 17 17 14 19 13C14 12 11.500 16 11 20Z" fill="#0d4fa0"/><path d="M18.500 14C22 15 22.500 18 21.500 20.500C20.500 22.500 23 24.500 27 24.500C31 24.500 34 23 36 21V27H34C27 30 17 28 15.500 21.500C15 17 16.500 15 18.500 14Z" fill="#f3f3f3"/></svg><i class="mt-[6px] w-[9px] h-[5px] rounded-full bg-[#888]"></i></div>
    <div class="pt-[16px] flex flex-col items-center"><svg class="w-[36px] h-[36px]" viewBox="0 0 36 36"><defs><linearGradient id="fo" x1="0" y1="0" x2="1" y2="1"><stop stop-color="#ffdc73"/><stop offset="1" stop-color="#fbb61f"/></linearGradient></defs><path d="M0 3Q0 2 1 2H11L15 5V8H0Z" fill="#dc9a10"/><path d="M0 8H12L15 5H35Q36 5 36 6V33Q36 34 35 34H1Q0 34 0 33Z" fill="url(#fo)"/><path d="M6 34V27Q6 24 9 24H27Q30 24 30 27V34Z" fill="#1379cf"/><path d="M10 29H25" stroke="#0b559c" stroke-width="1.600"/></svg><i class="mt-[6px] w-[9px] h-[5px] rounded-full bg-[#888]"></i></div>
    <div class="pt-[16px] flex justify-center"><svg class="w-[28px] h-[36px]" viewBox="0 0 28 36"><defs><clipPath id="dr"><path d="M16 0C17 5 28 13 28 22.500A14 13.500 0 0 1 0 22.500C0 14 12 8 16 0Z"/></clipPath></defs><g clip-path="url(#dr)"><rect width="28" height="36" fill="#22b0ee"/><path d="M0 22C10 24 12 33 28 31V0H0Z" fill="#8a63c9"/><path d="M5 11C12 15 18 22 28 23V0H5Z" fill="#e0487f"/><path d="M12 5C14 10 18 10 28 16V0H12Z" fill="#fcc419"/></g></svg></div>
    <div class="pt-[16px] flex flex-col items-center relative"><svg class="w-[36px] h-[36px]" viewBox="0 0 36 36"><circle cx="19" cy="7" r="5.500" fill="#7b83eb"/><path d="M20 14H35V24A8 8 0 0 1 24 27Z" fill="#5059c9"/><path d="M10 14H27V24A9.500 9.500 0 0 1 10 27Z" fill="#7b83eb"/><rect x="0" y="9" width="18" height="18" rx="1.500" fill="#4b53bc"/><path d="M5 13.500H13.500M9.200 13.500V23" stroke="#fff" stroke-width="2.400"/></svg><i class="mt-[6px] w-[9px] h-[5px] rounded-full bg-[#888]"></i>
      <svg class="absolute left-[41px] top-[13px] w-[18px] h-[18px]" viewBox="0 0 18 18"><circle cx="9" cy="9" r="8" fill="#6bb700" stroke="#fff" stroke-width="1.600"/><circle cx="9" cy="9" r="8.700" fill="none" stroke="#999" stroke-width=".6"/><path d="M5 9L8 12L13 6.500" fill="none" stroke="#fff" stroke-width="2"/></svg></div>
    <div class="pt-[16px] flex flex-col items-center"><svg class="w-[32px] h-[36px]" viewBox="0 0 32 36"><path d="M16 0L32 9V27L16 36L0 27V9Z" fill="#14a88b"/><path d="M0 27L16 18L32 27L16 36Z" fill="#0f9277"/><circle cx="16" cy="14" r="5" fill="#f7b32b"/><path d="M16 18V26" stroke="#e5e5e5" stroke-width="3"/><circle cx="16" cy="12.500" r="1.300" fill="#8a5a00"/></svg><i class="mt-[6px] w-[9px] h-[5px] rounded-full bg-[#888]"></i></div>
    <div class="pt-[5px] flex justify-center"><div class="relative w-[57px] h-[58px] rounded-md bg-[#fafafa] border border-[#e3e3e3] flex flex-col items-center pt-[10px]"><svg class="w-[36px] h-[36px]" viewBox="0 0 36 36"><circle cx="18" cy="18" r="18" fill="#ffcd40"/><path d="M18 18L2.400 9A18 18 0 0 1 33.600 9H18Z" fill="#ea4335"/><path d="M18 27L18 36A18 18 0 0 1 2.400 9L10.200 22.500Z" fill="#2a9948"/><path d="M18 36L25.800 22.500H20Z" fill="#ffcd40"/><circle cx="18" cy="18" r="8.800" fill="#fff"/><circle cx="18" cy="18" r="7" fill="#2f7cf0"/></svg><i class="mt-[6px] w-6 h-[5px] rounded-full bg-[#0078d4]"></i>
      <div class="absolute left-[29px] top-[3px] w-[24px] h-[24px] rounded-full bg-[#2f6a1d] text-[#cfe0ca] text-[14px] flex items-center justify-center">D</div></div></div>
    <div class="pt-[4px] flex"><div class="relative w-[60px] h-[60px] ml-[2px] rounded-md bg-[#fde7e9]"><div class="w-[51px] h-[60px] rounded-md border-r-2 border-[#f3f3f3] flex"></div>
      <svg class="absolute left-[13px] top-[13px] w-[34px] h-[34px]" viewBox="0 0 34 34"><defs><linearGradient id="sm" x1="0" y1="0" x2="0" y2="1"><stop stop-color="#10183a"/><stop offset=".5" stop-color="#0e2d5a"/><stop offset="1" stop-color="#1386bd"/></linearGradient></defs><circle cx="17" cy="17" r="17" fill="url(#sm)"/><path d="M0 17L12 22L18 15L23 19L13 27Q8 29 5 24L.5 21Z" fill="#fff"/><circle cx="22.500" cy="12.500" r="6.500" fill="#fff"/><circle cx="22.500" cy="12.500" r="4.500" fill="#fff" stroke="#12284e" stroke-width="1.500"/></svg>
      <i class="absolute left-[26px] top-[54px] w-[9px] h-[5px] rounded-full bg-[#c42b1c]"></i></div></div>
    <div class="pt-[16px] flex flex-col items-center relative"><svg class="w-[36px] h-[36px]" viewBox="0 0 36 36"><circle cx="18" cy="18" r="18" fill="#5865f2"/><g transform="translate(6.700 7.500) scale(.94)"><path fill="#fff" d="M20.317 4.3698a19.7913 19.7913 0 00-4.8851-1.5152.0741.0741 0 00-.0785.0371c-.211.3753-.4447.8648-.6083 1.2495-1.8447-.2762-3.68-.2762-5.4868 0-.1636-.3933-.4058-.8742-.6177-1.2495a.077.077 0 00-.0785-.037 19.7363 19.7363 0 00-4.8852 1.515.0699.0699 0 00-.0321.0277C.5334 9.0458-.319 13.5799.0992 18.0578a.0824.0824 0 00.0312.0561c2.0528 1.5076 4.0413 2.4228 5.9929 3.0294a.0777.0777 0 00.0842-.0276c.4616-.6304.8731-1.2952 1.226-1.9942a.076.076 0 00-.0416-.1057c-.6528-.2476-1.2743-.5495-1.8722-.8923a.077.077 0 01-.0076-.1277c.1258-.0943.2517-.1923.3718-.2914a.0743.0743 0 01.0776-.0105c3.9278 1.7933 8.18 1.7933 12.0614 0a.0739.0739 0 01.0785.0095c.1202.099.246.1981.3728.2924a.077.077 0 01-.0066.1276 12.2986 12.2986 0 01-1.873.8914.0766.0766 0 00-.0407.1067c.3604.698.7719 1.3628 1.225 1.9932a.076.076 0 00.0842.0286c1.961-.6067 3.9495-1.5219 6.0023-3.0294a.077.077 0 00.0313-.0552c.5004-5.177-.8382-9.6739-3.5485-13.6604a.061.061 0 00-.0312-.0286zM8.02 15.3312c-1.1825 0-2.1569-1.0857-2.1569-2.419 0-1.3332.9555-2.4189 2.157-2.4189 1.2108 0 2.1757 1.0952 2.1568 2.419 0 1.3332-.9555 2.4189-2.1569 2.4189zm7.9748 0c-1.1825 0-2.1569-1.0857-2.1569-2.419 0-1.3332.9554-2.4189 2.1569-2.4189 1.2108 0 2.1757 1.0952 2.1568 2.419 0 1.3332-.946 2.4189-2.1568 2.4189Z" transform="translate(0 -1)"/></g></svg><i class="mt-[6px] w-[9px] h-[5px] rounded-full bg-[#888]"></i>
      <div class="absolute left-[37px] top-[10px] w-[21px] h-[21px] rounded-full bg-[#ee5258] text-white text-[17px] font-semibold flex items-center justify-center">1</div></div>
  </div>
  <div class="ml-auto flex items-center pr-[28px]">
    <svg class="w-[18px] h-[11px]" viewBox="0 0 18 11"><path d="M.7 10L9 1.200L17.300 10" fill="none" stroke="#222" stroke-width="1.500"/></svg>
    <svg class="w-6 h-5 ml-[15px]" viewBox="0 0 24 20"><path d="M5 15.500A4.500 4.500 0 0 1 4 7A7 7 0 0 1 17 4.500Q20 6 20.500 9" fill="#999" stroke="#333" stroke-width="1.500"/><circle cx="17" cy="13.500" r="6.700" fill="#d9262f"/><path d="M14.500 11L19.500 16M19.500 11L14.500 16" stroke="#fff" stroke-width="1.500"/></svg>
    <div class="ml-[22px] w-9 text-center leading-[23px] text-[17.500px]">ENG<br>US</div>
    <svg class="w-6 h-[18px] ml-[27px]" viewBox="0 0 24 18"><g fill="none" stroke="#1b1b1b" stroke-width="1.700" stroke-linecap="round"><path d="M1 6.500A15.500 15.500 0 0 1 23 6.500"/><path d="M4.500 10A10.600 10.600 0 0 1 19.500 10"/><path d="M8 13.200A5.800 5.800 0 0 1 16 13.200"/></g><circle cx="12" cy="16" r="2" fill="#1b1b1b"/></svg>
    <svg class="w-6 h-[18px] ml-3" viewBox="0 0 24 18"><path d="M1 6H5L10.500 1V17L5 12H1Z" fill="none" stroke="#1b1b1b" stroke-width="1.500" stroke-linejoin="round"/><path d="M15 5L23 13M23 5L15 13" stroke="#1b1b1b" stroke-width="1.500"/></svg>
    <svg class="w-6 h-5 ml-3" viewBox="0 0 24 20"><path d="M12 4H18Q20.500 4 20.500 6.500V15Q20.500 17.500 18 17.500H4Q2.500 17.500 2 16.500" fill="none" stroke="#1b1b1b" stroke-width="1.500"/><rect x="21" y="8.500" width="3" height="4.500" rx="1" fill="#1b1b1b"/><path d="M8 0C12 4 12 9 8.500 12.500Q4 14 1 16C1 13 0 11 1 7Q2 3 8 0Z" fill="#1b1b1b"/><path d="M3 13L8 6" stroke="#f3f3f3" stroke-width="1"/></svg>
    <div class="ml-[22px] w-[78px] pb-[2px] text-right leading-6 whitespace-nowrap tracking-[-0.1px]">4:47 PM<br>2/11/2022</div>
    <div class="ml-[12px] mr-[-1px] w-[27px] h-6 rounded-full bg-[#0067c0] text-white text-[15px] flex items-center justify-center">10</div>
  </div>
</footer>
</body>
</html>
